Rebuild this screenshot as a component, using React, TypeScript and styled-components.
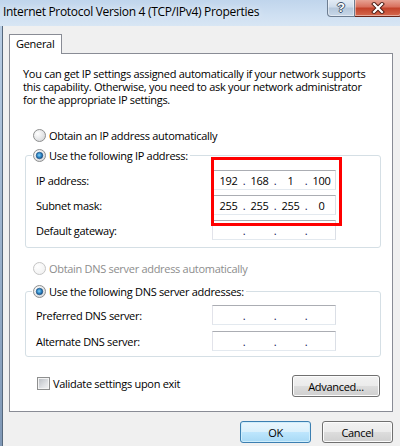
import React from 'react';
import styled, { createGlobalStyle } from 'styled-components';

const GlobalStyle = createGlobalStyle`
  html, body { margin: 0; padding: 0; background: #f0f0f0; }
  body {
    font-family: "Segoe UI", "Open Sans", "Noto Sans", sans-serif;
    font-size: 11px;
    letter-spacing: -0.3px;
    color: #000;
  }
  * { box-sizing: border-box; }
`;

const Window = styled.div`
  width: 400px;
  height: 446px;
  overflow: hidden;
  display: flex;
  flex-direction: column;
  background: linear-gradient(180deg, #c3d7ed 0%, #cadcf0 26px, #a9c0da 100%);
`;

const TitleBar = styled.div`
  height: 26px;
  display: flex;
  align-items: flex-start;
  flex-shrink: 0;
  background: linear-gradient(180deg, #c0d5ec 0%, #cfe0f2 60%, #d8e6f4 100%);
`;

const TitleText = styled.div`
  margin-left: 3px;
  line-height: 24px;
  font-size: 12px;
  color: #000;
  white-space: nowrap;
  text-shadow: 0 0 6px rgba(255, 255, 255, 0.9);
  flex: 1;
`;

const CaptionGroup = styled.div`
  display: flex;
  margin-right: -2px;
  margin-top: -1px;
`;

const CaptionButton = styled.div<{ $kind: 'help' | 'close' }>`
  height: 18px;
  width: ${p => (p.$kind === 'help' ? 28 : 47)}px;
  display: flex;
  align-items: center;
  justify-content: center;
  border: 1px solid ${p => (p.$kind === 'help' ? '#6d7d91' : '#6a2418')};
  border-top: none;
  border-left-width: ${p => (p.$kind === 'help' ? 1 : 0)}px;
  border-radius: ${p => (p.$kind === 'help' ? '0 0 0 4px' : '0 0 4px 0')};
  background: ${p =>
    p.$kind === 'help'
      ? 'linear-gradient(180deg, #e6eef7 0%, #cfdceb 45%, #b6c8dc 55%, #c8d7e8 100%)'
      : 'linear-gradient(180deg, #e9a99b 0%, #d9725f 45%, #c3432b 55%, #d5694f 100%)'};
  box-shadow: inset 0 0 0 1px rgba(255, 255, 255, 0.45);
`;

const HelpGlyph = styled.span`
  font-family: "Liberation Sans", sans-serif;
  font-weight: bold;
  font-size: 13px;
  letter-spacing: 0;
  line-height: 1;
  color: #fff;
  text-shadow: -1px 0 #3d4f66, 1px 0 #3d4f66, 0 -1px #3d4f66, 0 1px #3d4f66;
`;

const Body = styled.div`
  flex: 1;
  display: flex;
`;

const Frame = styled.div`
  width: 2px;
  background: linear-gradient(180deg, #b8cde4 0%, #7f98b6 100%);
`;

const Client = styled.div`
  flex: 1;
  background: #f0f0f0;
  border-left: 1px solid #56687c;
  padding: 8px 0 0 6px;
  display: flex;
  flex-direction: column;
  width: 384px;
`;

const TabStrip = styled.div`
  display: flex;
  height: 20px;
`;

const Tab = styled.div`
  width: 53px;
  height: 20px;
  border: 1px solid #898c95;
  border-bottom: none;
  background: #fff;
  padding-left: 6px;
  line-height: 18px;
  position: relative;
  z-index: 1;
  margin-bottom: -1px;
`;

const Panel = styled.div`
  position: relative;
  width: 384px;
  height: 359px;
  margin-top: -1px;
  border: 1px solid #898c95;
  background: #fff;
  padding: 13px 12px 0 13px;
  display: flex;
  flex-direction: column;
`;

const Description = styled.p`
  margin: 0;
  line-height: 13px;
  white-space: nowrap;
`;

const RadioRow = styled.label<{ $disabled?: boolean; $top?: number }>`
  display: flex;
  align-items: center;
  height: 16px;
  gap: 3px;
  margin-left: 10px;
  margin-top: ${p => p.$top ?? 0}px;
  color: ${p => (p.$disabled ? '#8d8d8d' : '#000')};
  white-space: nowrap;
`;

const Group = styled.fieldset<{ $top: number; $pt: number; $pb: number; $gap: number }>`
  margin: ${p => p.$top}px 0 0 2px;
  width: 356px;
  border: 1px solid #d5dfe5;
  border-radius: 3px;
  padding: ${p => p.$pt}px 6px ${p => p.$pb}px 6px;
  min-width: 0;
  display: grid;
  grid-template-columns: 176px 124px;
  row-gap: ${p => p.$gap}px;
  align-items: center;
  & > * { margin-left: 4px; }
`;

const Legend = styled.legend`
  padding: 0 2px 0 1px;
  margin: 0;
`;

const LegendRow = styled.span`
  display: flex;
  align-items: center;
  gap: 3px;
  height: 16px;
  white-space: nowrap;
`;

const FieldLabel = styled.span`
  white-space: nowrap;
`;

const IpBox = styled.div`
  height: 20px;
  width: 124px;
  border: 1px solid;
  border-color: #abadb3 #dbdfe6 #e3e9ef #e2e3ea;
  display: flex;
  align-items: center;
  padding-left: 2px;
  background: #fff;
`;

const Segment = styled.span`
  width: 27px;
  text-align: center;
`;

const Dot = styled.span`
  width: 4px;
  text-align: center;
  color: #101050;
`;

const BottomRow = styled.div`
  display: flex;
  justify-content: space-between;
  align-items: flex-start;
  margin-top: 18px;
`;

const CheckLabel = styled.label`
  display: flex;
  align-items: center;
  gap: 3px;
  margin-left: 14px;
  margin-top: 1px;
  height: 14px;
  white-space: nowrap;
`;

const CheckBox = styled.span`
  width: 13px;
  height: 13px;
  border: 1px solid #8e8f8f;
  background: linear-gradient(135deg, #b7bbc1 0%, #dfe1e4 60%, #f3f3f4 100%);
  box-shadow: inset 0 0 0 1px #f4f4f4;
`;

const Button = styled.button<{ $default?: boolean; $w: number }>`
  width: ${p => p.$w}px;
  height: 22px;
  padding: 0;
  font: inherit;
  letter-spacing: inherit;
  color: #000;
  border: 1px solid ${p => (p.$default ? '#3c7fb1' : '#707070')};
  border-radius: 3px;
  background: ${p =>
    p.$default
      ? 'linear-gradient(180deg, #eaf6fd 0%, #d9f0fc 50%, #bee6fd 51%, #a7d9f5 100%)'
      : 'linear-gradient(180deg, #f2f2f2 0%, #ebebeb 50%, #dddddd 51%, #cfcfcf 100%)'};
  box-shadow: inset 0 0 0 1px ${p => (p.$default ? '#cfeefc' : '#fcfcfc')};
`;

const Footer = styled.div`
  width: 384px;
  display: flex;
  justify-content: flex-end;
  gap: 11px;
  padding-top: 9px;
`;

const Annotation = styled.div`
  position: absolute;
  left: 201px;
  top: 103px;
  width: 131px;
  height: 69px;
  border: 3px solid #ff0000;
  pointer-events: none;
`;

function Radio({ checked, disabled }: { checked?: boolean; disabled?: boolean }) {
  const id = React.useId().replace(/:/g, '');
  return (
    <svg width="13" height="13" viewBox="0 0 13 13">
      <defs>
        <radialGradient id={`f${id}`} cx="0.35" cy="0.35" r="0.75">
          <stop offset="0" stopColor="#ffffff" />
          <stop offset="1" stopColor={disabled ? '#f0f0f0' : '#d4d6d8'} />
        </radialGradient>
        <radialGradient id={`d${id}`} cx="0.45" cy="0.45" r="0.6">
          <stop offset="0" stopColor="#8ad3f7" />
          <stop offset="0.55" stopColor="#2a84c4" />
          <stop offset="1" stopColor="#16457a" />
        </radialGradient>
      </defs>
      <circle cx="6.5" cy="6.5" r="6" fill={`url(#f${id})`} stroke={disabled ? '#c4c4c4' : '#8e8f8f'} strokeWidth="1" />
      {checked && <circle cx="6.5" cy="6.5" r="3.3" fill={`url(#d${id})`} stroke="#1d4f80" strokeWidth="0.6" />}
    </svg>
  );
}

function CloseGlyph() {
  return (
    <svg width="14" height="12" viewBox="0 0 14 12">
      <path d="M3 2 L11 10 M11 2 L3 10" stroke="#4a1a12" strokeWidth="4" strokeLinecap="square" />
      <path d="M3 2 L11 10 M11 2 L3 10" stroke="#ffffff" strokeWidth="2.2" strokeLinecap="square" />
    </svg>
  );
}

function Ip({ parts }: { parts: string[] }) {
  return (
    <IpBox>
      <Segment>{parts[0]}</Segment>
      <Dot>.</Dot>
      <Segment>{parts[1]}</Segment>
      <Dot>.</Dot>
      <Segment>{parts[2]}</Segment>
      <Dot>.</Dot>
      <Segment>{parts[3]}</Segment>
    </IpBox>
  );
}

const empty = ['', '', '', ''];

export default function App() {
  return (
    <>
      <GlobalStyle />
      <Window>
        <TitleBar>
          <TitleText>Internet Protocol Version 4 (TCP/IPv4) Properties</TitleText>
          <CaptionGroup>
            <CaptionButton $kind="help"><HelpGlyph>?</HelpGlyph></CaptionButton>
            <CaptionButton $kind="close"><CloseGlyph /></CaptionButton>
          </CaptionGroup>
        </TitleBar>
        <Body>
          <Frame />
          <Client>
            <TabStrip>
              <Tab>General</Tab>
            </TabStrip>
            <Panel>
              <Description>
                You can get IP settings assigned automatically if your network supports<br />
                this capability. Otherwise, you need to ask your network administrator<br />
                for the appropriate IP settings.
              </Description>
              <RadioRow $top={21}>
                <Radio />
                Obtain an IP address automatically
              </RadioRow>
              <Group $top={4} $pt={7} $pb={7} $gap={5}>
                <Legend>
                  <LegendRow>
                    <Radio checked />
                    Use the following IP address:
                  </LegendRow>
                </Legend>
                <FieldLabel>IP address:</FieldLabel>
                <Ip parts={['192', '168', '1', '100']} />
                <FieldLabel>Subnet mask:</FieldLabel>
                <Ip parts={['255', '255', '255', '0']} />
                <FieldLabel>Default gateway:</FieldLabel>
                <Ip parts={empty} />
              </Group>
              <RadioRow $top={12} $disabled>
                <Radio disabled />
                Obtain DNS server address automatically
              </RadioRow>
              <Group $top={7} $pt={6} $pb={5} $gap={6}>
                <Legend>
                  <LegendRow>
                    <Radio checked />
                    Use the following DNS server addresses:
                  </LegendRow>
                </Legend>
                <FieldLabel>Preferred DNS server:</FieldLabel>
                <Ip parts={empty} />
                <FieldLabel>Alternate DNS server:</FieldLabel>
                <Ip parts={empty} />
              </Group>
              <BottomRow>
                <CheckLabel>
                  <CheckBox />
                  Validate settings upon exit
                </CheckLabel>
                <Button $w={88}>Advanced...</Button>
              </BottomRow>
              <Annotation />
            </Panel>
            <Footer>
              <Button $w={71} $default>OK</Button>
              <Button $w={71}>Cancel</Button>
            </Footer>
          </Client>
        </Body>
      </Window>
    </>
  );
}
